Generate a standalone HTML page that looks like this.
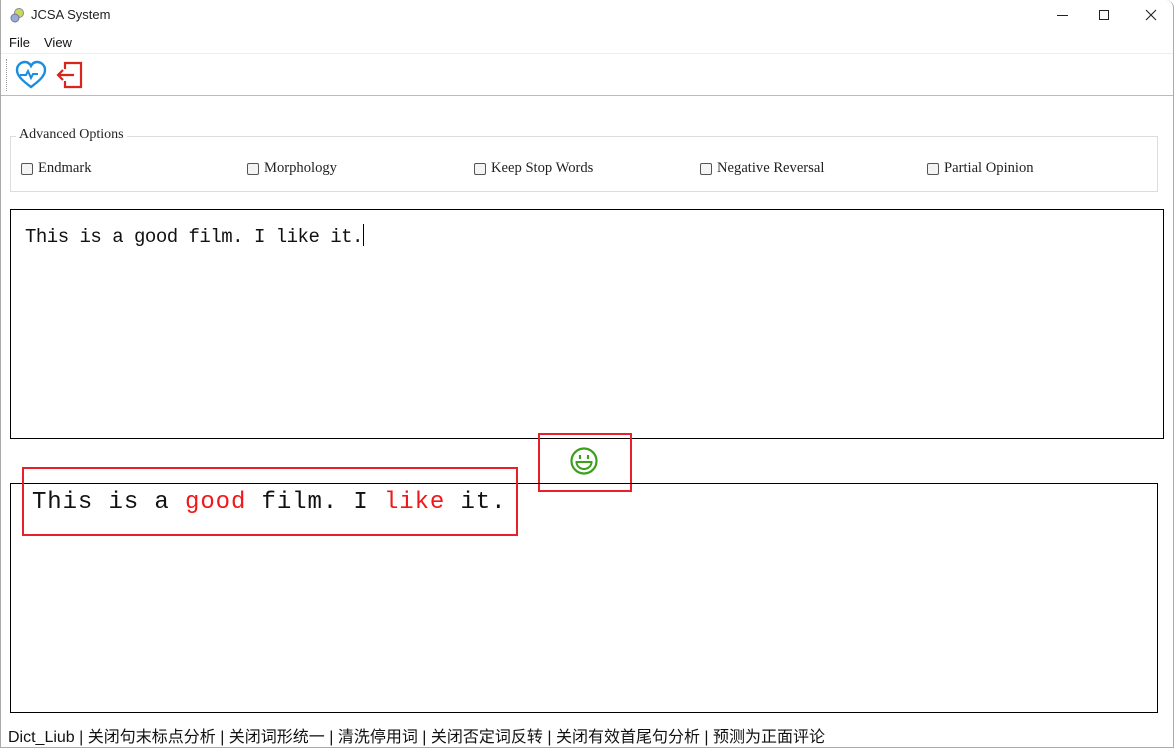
<!DOCTYPE html>
<html><head><meta charset="utf-8"><style>
*{margin:0;padding:0;box-sizing:border-box}
body{width:1174px;height:748px;overflow:hidden;background:#fff;position:relative;font-family:"Liberation Sans",sans-serif}
.abs{position:absolute}
.chk{position:absolute;top:160px;font:14.6px "Liberation Serif",serif;color:#222;display:flex;align-items:center}
.chk i{display:inline-block;width:12px;height:12px;border:1px solid #555;border-radius:2px;background:#f4f4f4;margin-right:5px}
</style></head><body>
<div class="abs" style="left:0;top:0;width:1174px;height:748px;border:1px solid #aaa;border-top:none;border-radius:0 8px 0 0"></div>
<svg class="abs" style="left:9px;top:7px" width="16" height="16"><circle cx="10" cy="6" r="4.5" fill="#c8d860" stroke="#889" /><circle cx="6" cy="11" r="4" fill="#99aadd" stroke="#778"/></svg>
<div class="abs" style="left:31px;top:7px;font-size:13px;color:#222">JCSA System</div>
<div class="abs" style="left:1057px;top:15px;width:11px;height:1px;background:#222"></div>
<div class="abs" style="left:1099px;top:10px;width:10px;height:10px;border:1px solid #222"></div>
<svg class="abs" style="left:1145px;top:9px" width="12" height="12"><path d="M1 1L11 11M11 1L1 11" stroke="#222" stroke-width="1.1"/></svg>
<div class="abs" style="left:9px;top:35px;font-size:13px;color:#111">File</div>
<div class="abs" style="left:44px;top:35px;font-size:13px;color:#111">View</div>
<div class="abs" style="left:1px;top:53px;width:1172px;height:1px;background:#eee"></div>
<div class="abs" style="left:6px;top:59px;width:1px;height:32px;border-left:1px dotted #999"></div>
<svg class="abs" style="left:15px;top:60px" width="32" height="30" viewBox="0 0 32 30"><path d="M16 27C8 21 2 16 2 10 2 5 6 2 10 2c3 0 5 2 6 4 1-2 3-4 6-4 4 0 8 3 8 8 0 6-6 11-14 17z" fill="none" stroke="#1a8ee0" stroke-width="2.4"/><path d="M5 15h6l2-4 3 7 2-4h5" fill="none" stroke="#1a8ee0" stroke-width="2"/></svg>
<svg class="abs" style="left:55px;top:61px" width="28" height="28" viewBox="0 0 28 28"><path d="M10 8V2h16v24H10v-6" fill="none" stroke="#d8261c" stroke-width="2.2"/><path d="M19 14H3M8 9l-5 5 5 5" fill="none" stroke="#d8261c" stroke-width="2.2"/></svg>
<div class="abs" style="left:1px;top:95px;width:1172px;height:1px;background:#bbb"></div>
<div class="abs" style="left:10px;top:136px;width:1148px;height:56px;border:1px solid #ddd"></div>
<div class="abs" style="left:16px;top:127px;background:#fff;padding:0 3px;font:14px 'Liberation Serif',serif;color:#222">Advanced Options</div>
<div class="chk" style="left:21px"><i></i>Endmark</div>
<div class="chk" style="left:247px"><i></i>Morphology</div>
<div class="chk" style="left:474px"><i></i>Keep Stop Words</div>
<div class="chk" style="left:700px"><i></i>Negative Reversal</div>
<div class="chk" style="left:927px"><i></i>Partial Opinion</div>
<div class="abs" style="left:10px;top:209px;width:1154px;height:230px;border:1px solid #000"></div>
<div class="abs" style="left:25px;top:224px;font:19px 'Liberation Mono',monospace;color:#111;letter-spacing:-0.5px;white-space:pre">This is a good film. I like it.<span style="display:inline-block;width:1px;height:22px;background:#000;vertical-align:-4px"></span></div>
<div class="abs" style="left:538px;top:433px;width:94px;height:59px;border:2px solid #e8202a"></div>
<svg class="abs" style="left:569px;top:446px" width="30" height="30" viewBox="0 0 30 30"><circle cx="15" cy="15" r="12.5" fill="none" stroke="#3aa01a" stroke-width="2.2"/><path d="M11 9v4M19 9v4" stroke="#3aa01a" stroke-width="2.2"/><path d="M7.5 16h15c0 4-3.5 7-7.5 7s-7.5-3-7.5-7z" fill="none" stroke="#3aa01a" stroke-width="2"/></svg>
<div class="abs" style="left:10px;top:483px;width:1148px;height:230px;border:1px solid #000"></div>
<div class="abs" style="left:22px;top:467px;width:496px;height:69px;border:2px solid #e8202a"></div>
<div class="abs" style="left:32px;top:489px;font:24px 'Liberation Mono',monospace;color:#111;letter-spacing:0.9px;white-space:pre">This is a <span style="color:#f01818">good</span> film. I <span style="color:#f01818">like</span> it.</div>
<div class="abs" style="left:8px;top:723px;font-size:16px;color:#111;font-family:'Liberation Sans','Noto Sans CJK SC',sans-serif;white-space:nowrap">Dict_Liub | 关闭句末标点分析 | 关闭词形统一 | 清洗停用词 | 关闭否定词反转 | 关闭有效首尾句分析 | 预测为正面评论</div>
</body></html>
